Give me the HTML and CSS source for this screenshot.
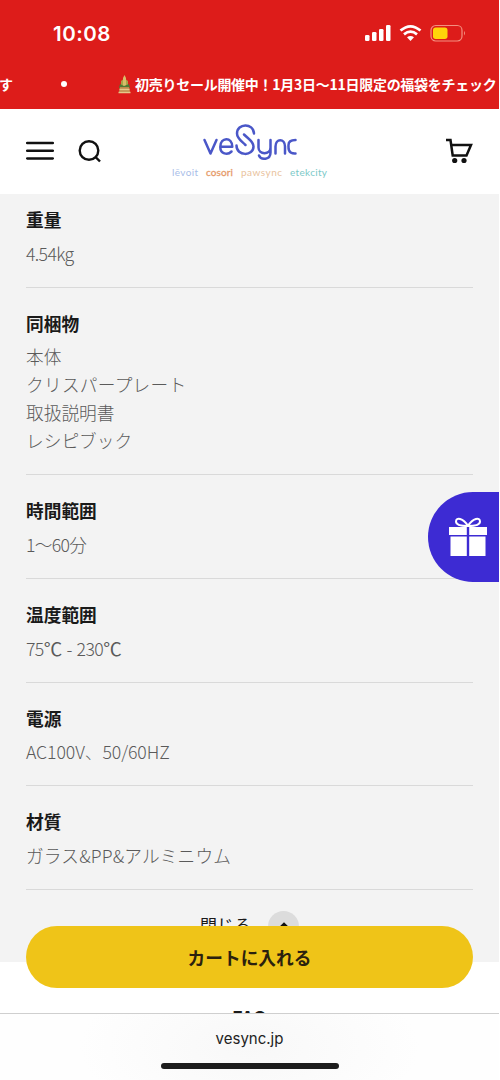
FILE: index.html
```html
<!DOCTYPE html>
<html lang="ja">
<head>
<meta charset="utf-8">
<title>VeSync</title>
<link rel="stylesheet" href="styles.css">
</head>
<body>
<div class="screen">
  <div class="top">
    <div class="status">
      <span class="clock">10:08</span>
      <svg class="indicators" width="104" height="20" viewBox="0 0 104 20">
        <g fill="#fff">
          <rect x="1" y="11" width="4.500" height="6" rx="1.300"/>
          <rect x="8" y="8" width="4.500" height="9" rx="1.300"/>
          <rect x="15" y="5" width="4.500" height="12" rx="1.300"/>
          <rect x="22" y="1" width="4.500" height="16" rx="1.300"/>
        </g>
        <g fill="none" stroke="#fff" stroke-width="2.700">
          <path d="M36.500 6.600Q46.500 -2 56.500 6.600"/>
          <path d="M40 10.400Q46.500 4.900 53 10.400"/>
        </g>
        <path d="M43 13.300Q46.500 10.600 50 13.300L46.500 17Z" fill="#fff"/>
        <rect x="67" y="1.500" width="31" height="15.500" rx="4.700" fill="none" stroke="#f39080" stroke-width="1.200"/>
        <rect x="69" y="3.500" width="14.500" height="11.500" rx="2.700" fill="#ffd50a"/>
        <path d="M100 7q2 2.200 0 4.400z" fill="#f39080"/>
      </svg>
    </div>
    <div class="ticker">
      <span class="prev">す</span>
      <i class="dot"></i>
      <svg class="pine" width="13" height="19" viewBox="0 0 13 19">
        <path d="M5 3L6.500 0 8 3V12H5z" fill="#d8bd69"/>
        <path d="M3 6l2-1.500V13H3zM8 4.500L10 6v7H8z" fill="#a9a348"/>
        <path d="M2 9l4 2 5-2 1 4H1z" fill="#4d7a35"/>
        <path d="M2 12h9l1 5H1z" fill="#bd8a4b"/>
        <path d="M1.500 14.500h10M0.500 17.500h12" stroke="#e5c88a" stroke-width="1.500"/>
      </svg>
      <span class="promo">初売りセール開催中！1月3日〜11日限定の福袋をチェック</span>
    </div>
  </div>

  <header class="header">
    <div class="tools">
      <svg width="28" height="20" viewBox="0 0 28 20" stroke="#111" stroke-width="2.500" stroke-linecap="round"><path d="M1.200 2h25.600M1.200 9.700h25.600M1.200 17.400h25.600"/></svg>
      <svg width="24" height="24" viewBox="0 0 24 24" fill="none" stroke="#111" stroke-width="2.400"><circle cx="11" cy="11.500" r="9.300"/><path d="M17.500 18L22 22.500"/></svg>
    </div>
    <svg class="logo" width="160" height="60" viewBox="0 0 160 60">
      <g fill="none" stroke="#4a57c8" stroke-width="2.500" stroke-linecap="round" stroke-linejoin="round">
        <path d="M36.500 19L42.500 32.500 48.500 19"/>
        <path d="M52.500 25.700H64.300C64.300 15.500 52.300 15.800 52.300 25.900C52.300 33 59.500 34.500 63.500 30.500"/>
        <path d="M86 12.500C85.500 1.500 69 2 69 12.500C69 17.500 73 19.500 77.500 24"/>
        <path d="M68.500 24.500C68.500 35.500 85.500 35.500 85.500 25.500C85.500 20.500 81 18.500 76 13.500"/>
        <path d="M90.500 19v7.500c0 7.500 12 7.500 12 0V19v12.500c0 7.500-9.500 8-11.500 3"/>
        <path d="M107.500 32.500V25.500c0-8.500 9.500-8.500 9.500 0v7"/>
        <path d="M127.500 32.500H126.500C119.500 32.500 120.500 26 120.500 24C120.500 19.500 124 19 127.500 19"/>
      </g>
      <g class="brands">
        <text x="4" y="55" textLength="26" fill="#a8bde8">lēvoit</text>
        <text x="38" y="55" textLength="27" fill="#e69b6a" stroke="#e69b6a" stroke-width=".3">cosori</text>
        <text x="73" y="55" textLength="41" fill="#e9c29d">pawsync</text>
        <text x="122" y="55" textLength="37" fill="#7cc9c8">etekcity</text>
      </g>
    </svg>
    <svg class="cart" width="30" height="26" viewBox="0 0 30 26"><path d="M2 2h4.500l2.200 15.500h13.800L27 7H7.400" fill="none" stroke="#111" stroke-width="2.500"/><circle cx="10.700" cy="22.500" r="2.600" fill="#111"/><circle cx="20" cy="22.500" r="2.600" fill="#111"/></svg>
  </header>

  <main class="specs">
    <section class="row first"><h3>重量</h3><p><span class="weight">4.54kg</span></p></section>
    <section class="row"><h3>同梱物</h3><p>本体<br><span class="plate">クリスパープレート</span><br>取扱説明書<br>レシピブック</p></section>
    <section class="row"><h3>時間範囲</h3><p><span class="time">1〜60分</span></p></section>
    <section class="row"><h3>温度範囲</h3><p><span class="temp">75<b>℃</b> - 230<b>℃</b></span></p></section>
    <section class="row"><h3>電源</h3><p><span class="power">AC100V、50/60HZ</span></p></section>
    <section class="row"><h3>材質</h3><p><span class="material">ガラス&amp;PP&amp;アルミニウム</span></p></section>
    <div class="collapse">
      <span>閉じる</span>
      <i class="toggle"><svg width="12" height="8" viewBox="0 0 12 8"><path d="M1.500 6.500L6 2l4.500 4.500" fill="none" stroke="#111" stroke-width="2.500"/></svg></i>
    </div>
  </main>
  <h2 class="faq">FAQ</h2>

  <div class="gift">
    <svg width="40" height="40" viewBox="0 0 40 40">
      <path d="M20 9C15 1 8 0 8 4.500C8 8 14 9 20 9C25 1 32 0 32 4.500C32 8 26 9 20 9Z" fill="none" stroke="#fff" stroke-width="2"/>
      <path d="M1 10h17.800v8H1zM21.200 10H39v8H21.200zM2.500 19.500h16.300V39H2.500zM21.200 19.500h16.300V39H21.200z" fill="#fff"/>
    </svg>
  </div>
  <button class="buy">カートに入れる</button>
  <footer class="browser"><span>vesync.jp</span><i class="home"></i></footer>
</div>
</body>
</html>
```

FILE: styles.css
```css
* { box-sizing: border-box; }
body { margin: 0; background: #fff; font-family: "Noto Sans CJK JP", sans-serif; overflow: hidden; }
.screen { position: relative; width: 499px; height: 1080px; overflow: hidden; background: #fff; }
h2, h3, p { margin: 0; }
svg { display: block; flex: none; }

.top { height: 109px; background: #dd1c1a; color: #fff; overflow: hidden; }
.status { height: 67px; padding: 0 32px 0 53px; display: flex; align-items: center; justify-content: space-between; }
.clock { font: 600 20.500px/24px Inter, sans-serif; letter-spacing: .5px; }
.status .indicators { margin-right: -1px; }
.ticker { height: 34px; display: flex; align-items: center; white-space: nowrap; font-size: 14px; font-weight: 700; line-height: 20px; }
.prev { width: 14px; margin-left: -1px; flex: none; }
.dot { width: 6px; height: 6px; border-radius: 50%; background: #fff; margin-left: 48px; flex: none; }
.pine { margin-left: 51px; }
.promo { margin-left: 4px; letter-spacing: -.27px; }

.header { height: 84.500px; padding: 0 26px; display: flex; align-items: center; justify-content: space-between; background: #fff; }
.tools { display: flex; align-items: center; gap: 24px; width: 120px; }
.logo { margin-left: 9px; }
.brands { font-family: Lato, sans-serif; font-size: 10px; }
.cart { margin-left: 103px; position: relative; left: 1px; }

.specs { height: 768px; background: #f3f3f3; padding: 0 26px; color: #1a1a1a; }
.row { padding: 23px 0 20px; border-bottom: 1px solid #d9d9d9; }
.row.first { padding-top: 13.500px; }
.row h3 { font-size: 17.700px; line-height: 24px; font-weight: 700; }
.row p { margin-top: 7.500px; font-size: 17.700px; line-height: 28.100px; font-weight: 300; color: #5a5a5a; }
.weight { letter-spacing: -.65px; }
.plate { letter-spacing: .25px; }
.time { letter-spacing: -.7px; }
.temp { letter-spacing: -.6px; word-spacing: 1.500px; }
.temp b { font-size: 18.500px; font-weight: 400; }
.power { letter-spacing: -.1px; }
.material { letter-spacing: .15px; }
.collapse { display: flex; align-items: center; justify-content: center; gap: 17px; margin-top: 21px; height: 31px; font-size: 17px; line-height: 24px; }
.collapse span { padding-bottom: 2px; }
.toggle { width: 31px; height: 31px; border-radius: 50%; background: #dcdcdc; display: flex; align-items: center; justify-content: center; }
.faq { margin-top: 42px; text-align: center; font-size: 18px; line-height: 26px; color: #1a1a1a; }

.gift { position: absolute; top: 492px; right: 0; width: 71px; height: 90px; padding: 0 0 0 20px; border-radius: 45px 0 0 45px; background: #3d2bd3; display: flex; align-items: center; }
.buy { position: absolute; left: 26px; top: 926px; width: 447px; height: 62px; padding: 0; border: 0; border-radius: 31px; background: #efc418; color: #2b210e; font: 700 17.700px/28px "Noto Sans CJK JP", sans-serif; }
.browser { position: absolute; left: 0; bottom: 0; width: 100%; height: 67px; padding-top: 14px; border-top: 1px solid #cfcfcf; background: radial-gradient(ellipse 170px 80px at 50% 50%, #f8f8f8, #fefefe); display: flex; flex-direction: column; align-items: center; font: 400 15px/22px Inter, sans-serif; color: #222; }
.home { width: 178px; height: 6px; margin-top: 13px; border-radius: 3px; background: #1c1c1c; }
```
